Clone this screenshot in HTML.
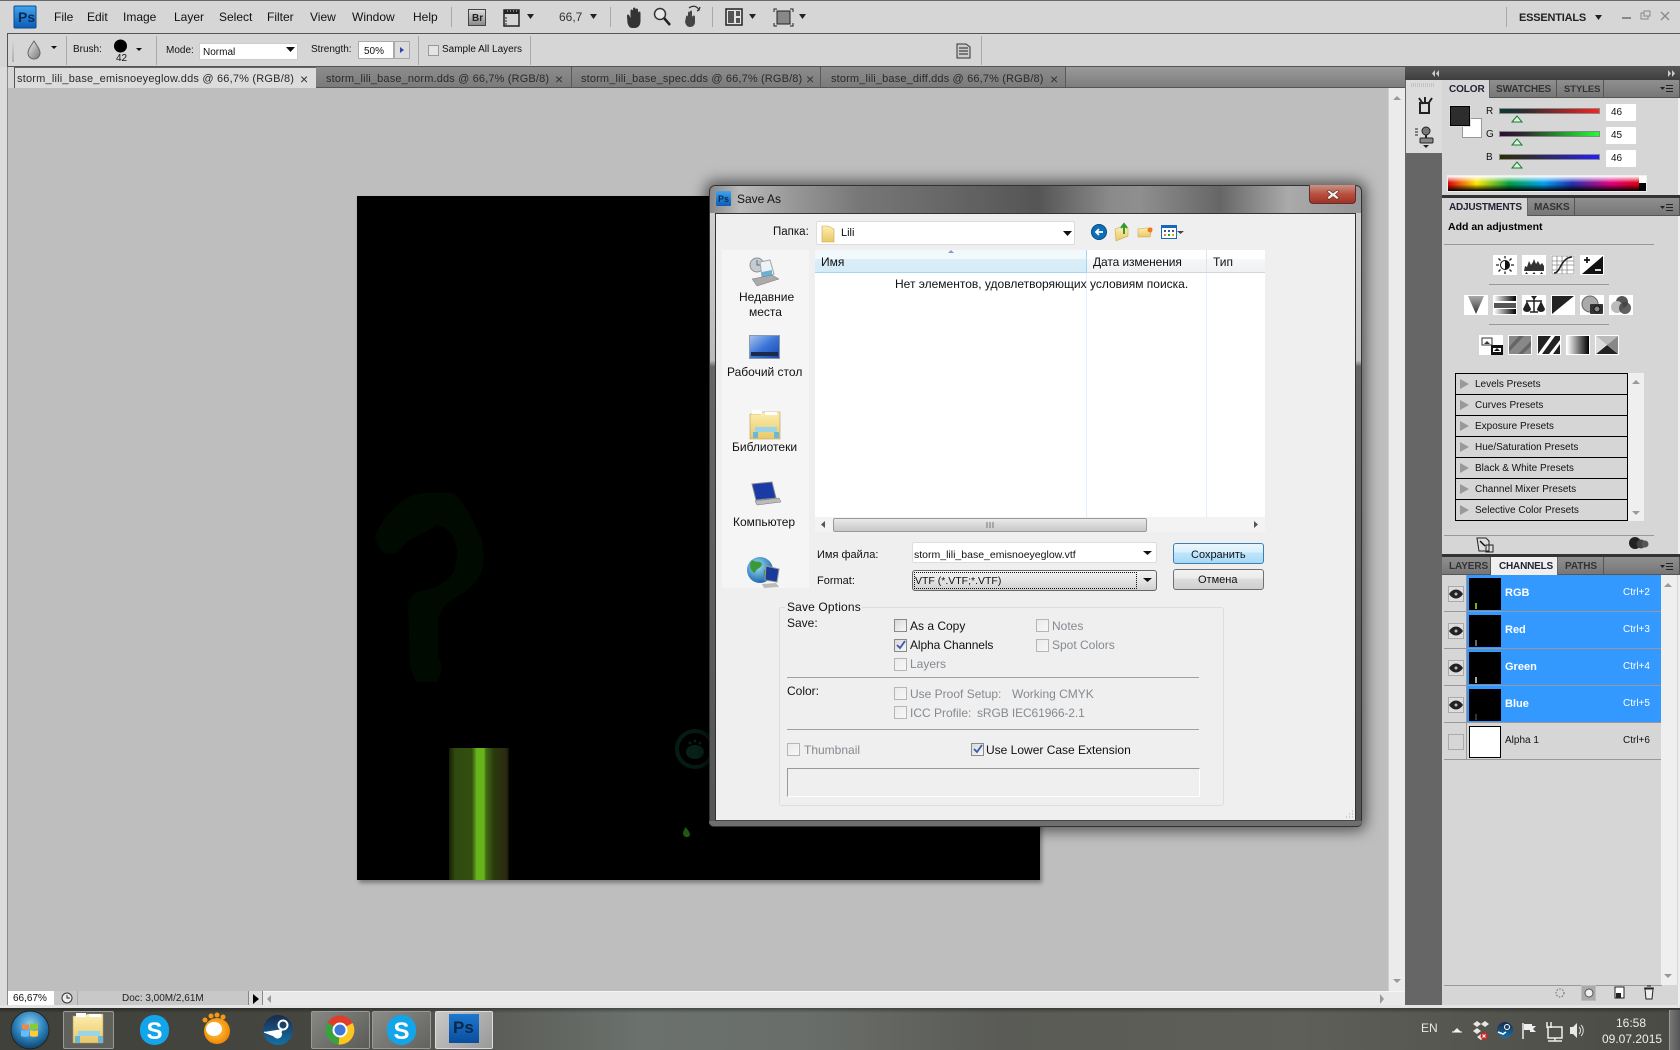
<!DOCTYPE html>
<html lang="en"><head><meta charset="utf-8"><title>Photoshop Save As</title>
<style>
html,body{margin:0;padding:0;width:1680px;height:1050px;overflow:hidden;background:#d6d6d6}
body{position:relative;font-family:"Liberation Sans","DejaVu Sans",sans-serif;font-size:12px;color:#111}
div{position:absolute;box-sizing:border-box}
i{position:absolute;font-style:normal;white-space:nowrap;line-height:14px}
svg{position:absolute;left:0;top:0}
.tab{top:67px;height:21px;background:linear-gradient(#8c8c8c,#7b7b7b);border-right:1px solid #5a5a5a;border-bottom:1px solid #555}
.sep{background:#a9a9a9;width:1px}
.f11{font-size:11px}.f10{font-size:10px}
.tt{font-size:11px;letter-spacing:.2px;top:72px;color:#2a2a2a}
.tx{font-size:14px;top:72px;color:#333}
.pt{background:linear-gradient(#8f8f8f,#777);border-right:1px solid #555;border-bottom:1px solid #555;height:18px}
.pa{background:#d6d6d6;height:18px;border-right:1px solid #666}
.tb{font-weight:bold;font-size:10px;color:#333;letter-spacing:-.1px}
.row{left:1444px;width:217px;height:37px;border-bottom:1px solid #999}
.sel{left:23px;width:194px;top:0;bottom:0;background:#3399ff}
.thumb{background:#000;left:1469px;width:32px;height:32px}
.eye{left:1448px;width:16px;height:16px;border:1px solid #aaa;background:#ddd}
.p{left:1455px;width:173px;height:21px;border:1px solid #000;border-bottom:0}
.cb{width:13px;height:13px;border:1px solid #8a8a8a;background:linear-gradient(135deg,#d9d9d9,#f7f7f7)}
.cb.d{border-color:#b6b6b6;background:linear-gradient(135deg,#ebebeb,#f7f7f7)}
.dis{color:#858a90}
.ctl{background:#fff;border-radius:2px;border:1px solid #d6d6d6}
</style></head><body>

<!-- Menu bar -->
<div style="left:0;top:0;width:1680px;height:33px;background:#d6d6d6;border-top:1px solid #6a6a6a"></div>
<i style="left:54px;top:10px">File</i><i style="left:87px;top:10px">Edit</i><i style="left:123px;top:10px">Image</i><i style="left:174px;top:10px">Layer</i><i style="left:219px;top:10px">Select</i><i style="left:267px;top:10px">Filter</i><i style="left:310px;top:10px">View</i><i style="left:352px;top:10px">Window</i><i style="left:413px;top:10px">Help</i>
<div class="sep" style="left:451px;top:7px;height:20px"></div><div class="sep" style="left:610px;top:7px;height:20px"></div><div class="sep" style="left:712px;top:7px;height:20px"></div><div class="sep" style="left:1506px;top:7px;height:20px"></div>
<i style="left:559px;top:10px;color:#333">66,7</i>
<i style="left:1519px;top:11px;font-weight:bold;color:#222;letter-spacing:-.2px;font-size:11px">ESSENTIALS</i>

<!-- Options bar -->
<div style="left:7px;top:33px;width:1673px;height:34px;background:#d6d6d6;border:1px solid #555;border-right:0"></div>
<div class="sep" style="left:66px;top:36px;height:29px"></div><div class="sep" style="left:156px;top:36px;height:29px"></div><div class="sep" style="left:418px;top:36px;height:29px"></div><div class="sep" style="left:530px;top:36px;height:29px"></div><div class="sep" style="left:981px;top:36px;height:29px"></div>
<i class="f10" style="left:73px;top:43px">Brush:</i><i class="f10" style="left:116px;top:52px">42</i><i class="f10" style="left:166px;top:44px">Mode:</i>
<div style="left:199px;top:43px;width:99px;height:17px;background:#fff;border:1px solid #ccc"></div><i class="f10" style="left:203px;top:46px">Normal</i>
<i class="f10" style="left:311px;top:43px">Strength:</i>
<div style="left:358px;top:41px;width:36px;height:18px;background:#fff;border:1px solid #aaa"></div><i class="f10" style="left:364px;top:45px">50%</i>
<div style="left:394px;top:41px;width:16px;height:18px;background:#dcdcdc;border:1px solid #aaa"></div>
<div style="left:428px;top:45px;width:11px;height:11px;border:1px solid #999;background:#e4e4e4"></div><i class="f10" style="left:442px;top:43px">Sample All Layers</i>

<!-- Tabs -->
<div style="left:1066px;top:67px;width:339px;height:21px;background:linear-gradient(#9a9a9a,#7d7d7d);border-bottom:1px solid #555"></div>
<div style="left:14px;top:67px;width:302px;height:21px;background:#dcdcdc;border-left:1px solid #555;border-top:1px solid #666"></div>
<div class="tab" style="left:316px;width:256px"></div><div class="tab" style="left:572px;width:249px"></div><div class="tab" style="left:821px;width:245px"></div>
<i class="tt" style="left:17px">storm_lili_base_emisnoeyeglow.dds @ 66,7% (RGB/8)</i><i class="tx" style="left:300px">×</i>
<i class="tt" style="left:326px;letter-spacing:.15px">storm_lili_base_norm.dds @ 66,7% (RGB/8)</i><i class="tx" style="left:555px">×</i>
<i class="tt" style="left:581px;letter-spacing:.15px">storm_lili_base_spec.dds @ 66,7% (RGB/8)</i><i class="tx" style="left:806px">×</i>
<i class="tt" style="left:831px;letter-spacing:.15px">storm_lili_base_diff.dds @ 66,7% (RGB/8)</i><i class="tx" style="left:1050px">×</i>

<!-- Workspace -->
<div style="left:0;top:67px;width:8px;height:943px;background:#dcdcdc;border-right:1px solid #8a8a8a"></div>
<div style="left:8px;top:88px;width:1380px;height:903px;background:#bebebe"></div>
<div style="left:1388px;top:88px;width:17px;height:903px;background:#ebebeb;border-left:1px solid #cfcfcf"></div>
<div style="left:8px;top:991px;width:1397px;height:14px;background:#e9e9e9;border-top:1px solid #f5f5f5"></div>
<div style="left:8px;top:1005px;width:1397px;height:1px;background:#999"></div>
<div style="left:8px;top:991px;width:46px;height:14px;background:#fff"></div><i class="f10" style="left:13px;top:992px">66,67%</i>
<div style="left:54px;top:991px;width:209px;height:14px;background:#c8c8c8"></div><div style="left:77px;top:991px;width:1px;height:14px;background:#aaa"></div>
<i class="f10" style="left:122px;top:992px;color:#222">Doc: 3,00M/2,61M</i>
<div style="left:248px;top:991px;width:15px;height:14px;background:#ddd;border-left:1px solid #888;border-right:1px solid #888"></div>

<!-- Document -->
<div style="left:357px;top:196px;width:683px;height:684px;background:#000;box-shadow:2px 3px 4px rgba(0,0,0,.35);overflow:hidden">
  <svg width="683" height="684" style="left:0;top:0">
  <path d="M18 342C20 330 36 310 50 302C60 297 70 296 96 297C106 303 116 325 125 344C127 355 127 362 126 371C122 382 118 387 113 392C106 398 97 402 90 407C85 413 82 418 81 424L81 461C83 465 85 468 85 471C84 477 82 481 80 486L60 486C57 481 55 476 53 471L51 407C53 402 56 399 60 396C67 394 74 393 80 391C87 386 92 382 96 377C99 370 100 362 100 354C99 347 96 341 93 336C89 332 85 330 80 329C70 335 60 340 50 346C46 350 43 353 40 357C35 358 30 358 26 356C22 352 20 347 18 342Z" fill="#010a01"/>
  <circle cx="338" cy="553" r="18" fill="none" stroke="#051c14" stroke-width="4"/><ellipse cx="338" cy="556" rx="9" ry="7" fill="#08221a"/><circle cx="333" cy="547" r="1.500" fill="#08221a"/><circle cx="338" cy="545" r="1.500" fill="#08221a"/><circle cx="343" cy="547" r="1.500" fill="#08221a"/>
  <path d="M326 638c0-3 2-5 2-7c3 2 5 6 5 8c-1 3-6 3-7-1z" fill="#1f5a10"/></svg>
  <div style="left:92px;top:552px;width:60px;height:132px;background:linear-gradient(90deg,#141f07 0,#2f4a0f 10%,#334f10 38%,#4f8a17 43%,#66b31c 46%,#66b31c 58%,#3f6a13 62%,#2a3a0e 75%,#2a2a10 95%,#110f05 100%)"></div>
</div>

<!-- Right dock -->
<div style="left:1405px;top:67px;width:275px;height:13px;background:linear-gradient(#565656,#3e3e3e)"></div>
<div style="left:1405px;top:80px;width:37px;height:930px;background:#666"></div>
<div style="left:1406px;top:80px;width:36px;height:73px;background:#dcdcdc"></div>
<div style="left:1442px;top:80px;width:238px;height:925px;background:#d6d6d6;border-right:2px solid #efefef"></div>

<!-- Color panel -->
<div class="pt" style="left:1490px;top:80px;width:190px"></div>
<div class="pt" style="left:1490px;top:80px;width:67px"></div><div class="pt" style="left:1557px;top:80px;width:47px"></div>
<div class="pa" style="left:1442px;top:80px;width:48px"></div>
<i class="tb" style="left:1449px;top:83px;color:#223">COLOR</i><i class="tb" style="left:1496px;top:83px">SWATCHES</i><i class="tb" style="left:1564px;top:83px;font-size:9.5px">STYLES</i>
<div style="left:1462px;top:118px;width:20px;height:20px;background:#fff;border:1px solid #999"></div>
<div style="left:1450px;top:106px;width:20px;height:20px;background:#2e2d2e;border:1px solid #000;outline:1px solid #ddd"></div>
<i class="f10" style="left:1486px;top:105px">R</i><i class="f10" style="left:1486px;top:128px">G</i><i class="f10" style="left:1486px;top:151px">B</i>
<div style="left:1499px;top:108px;width:101px;height:6px;background:linear-gradient(90deg,#0a3a3a,#2e2d2e 25%,#ff2020);border:1px solid #888"></div>
<div style="left:1499px;top:131px;width:101px;height:6px;background:linear-gradient(90deg,#2e0a35,#2e2d2e 25%,#20ff30);border:1px solid #888"></div>
<div style="left:1499px;top:154px;width:101px;height:6px;background:linear-gradient(90deg,#2e2d00,#2e2d2e 25%,#2020ff);border:1px solid #888"></div>
<div class="ctl" style="left:1605px;top:103px;width:32px;height:19px"></div><div class="ctl" style="left:1605px;top:126px;width:32px;height:19px"></div><div class="ctl" style="left:1605px;top:149px;width:32px;height:19px"></div>
<i class="f10" style="left:1611px;top:106px">46</i><i class="f10" style="left:1611px;top:129px">45</i><i class="f10" style="left:1611px;top:152px">46</i>
<div style="left:1447px;top:175px;width:200px;height:17px;background:#eee"></div>
<div style="left:1448px;top:176px;width:191px;height:15px;background:linear-gradient(#fff 0,rgba(255,255,255,0) 45%,rgba(0,0,0,0) 55%,#000 100%),linear-gradient(90deg,#e00010 0,#ffe800 15%,#00a040 32%,#00a0f0 50%,#2030b0 65%,#e00080 85%,#e00010 100%)"></div>
<div style="left:1639px;top:176px;width:7px;height:7px;background:#fff"></div><div style="left:1639px;top:183px;width:7px;height:8px;background:#000"></div>

<!-- Adjustments panel -->
<div style="left:1442px;top:195px;width:238px;height:3px;background:#333"></div>
<div class="pt" style="left:1528px;top:198px;width:152px"></div><div class="pt" style="left:1528px;top:198px;width:47px"></div>
<div class="pa" style="left:1442px;top:198px;width:86px"></div>
<i class="tb" style="left:1449px;top:201px;color:#223;letter-spacing:-.2px">ADJUSTMENTS</i><i class="tb" style="left:1534px;top:201px">MASKS</i>
<i style="left:1448px;top:220px;font-weight:bold;font-size:10.5px;color:#000">Add an adjustment</i>
<div style="left:1444px;top:244px;width:210px;height:1px;background:#999"></div>
<div style="left:1489px;top:284px;width:120px;height:1px;background:#999"></div>
<div style="left:1489px;top:324px;width:120px;height:1px;background:#999"></div>

<!-- Presets -->
<div class="p" style="top:373px"></div><div class="p" style="top:394px"></div><div class="p" style="top:415px"></div><div class="p" style="top:436px"></div><div class="p" style="top:457px"></div><div class="p" style="top:478px"></div>
<div class="p" style="top:499px;height:22px;border-bottom:1px solid #000"></div>
<div style="left:1628px;top:373px;width:16px;height:148px;background:#efefef"></div>
<i class="f10" style="left:1475px;top:378px;color:#111">Levels Presets</i><i class="f10" style="left:1475px;top:399px;color:#111">Curves Presets</i><i class="f10" style="left:1475px;top:420px;color:#111">Exposure Presets</i><i class="f10" style="left:1475px;top:441px;color:#111">Hue/Saturation Presets</i><i class="f10" style="left:1475px;top:462px;color:#111">Black &amp; White Presets</i><i class="f10" style="left:1475px;top:483px;color:#111">Channel Mixer Presets</i><i class="f10" style="left:1475px;top:504px;color:#111">Selective Color Presets</i>
<div style="left:1444px;top:535px;width:210px;height:1px;background:#999"></div>

<!-- Channels panel -->
<div style="left:1442px;top:554px;width:238px;height:3px;background:#333"></div>
<div class="pt" style="left:1558px;top:557px;width:122px"></div><div class="pt" style="left:1558px;top:557px;width:46px"></div><div class="pt" style="left:1442px;top:557px;width:49px"></div>
<div class="pa" style="left:1491px;top:557px;width:67px;background:#efefef"></div>
<i class="tb" style="left:1449px;top:560px">LAYERS</i><i class="tb" style="left:1499px;top:560px;color:#223;letter-spacing:-.2px">CHANNELS</i><i class="tb" style="left:1565px;top:560px">PATHS</i>
<div style="left:1661px;top:575px;width:16px;height:410px;background:#efefef"></div>
<div class="row" style="top:575px"><div class="sel"></div></div>
<div class="row" style="top:612px"><div class="sel"></div></div>
<div class="row" style="top:649px"><div class="sel"></div></div>
<div class="row" style="top:686px"><div class="sel"></div></div>
<div class="row" style="top:723px"></div>
<div style="left:1466px;top:575px;width:1px;height:185px;background:#999"></div>
<div class="eye" style="top:586px"></div><div class="eye" style="top:623px"></div><div class="eye" style="top:660px"></div><div class="eye" style="top:697px"></div><div class="eye" style="top:734px;background:#d6d6d6"></div>
<div class="thumb" style="top:578px"></div><div class="thumb" style="top:615px"></div><div class="thumb" style="top:652px"></div><div class="thumb" style="top:689px"></div>
<div style="left:1475px;top:603px;width:2px;height:6px;background:#6bb81f"></div><div style="left:1475px;top:640px;width:2px;height:6px;background:#666"></div><div style="left:1475px;top:677px;width:2px;height:6px;background:#aaa"></div><div style="left:1475px;top:714px;width:2px;height:6px;background:#333"></div>
<div style="left:1469px;top:726px;width:32px;height:32px;background:#fff;border:1px solid #000"></div>
<i class="f11" style="left:1505px;top:586px;color:#fff;font-weight:bold">RGB</i><i class="f11" style="left:1505px;top:623px;color:#fff;font-weight:bold">Red</i><i class="f11" style="left:1505px;top:660px;color:#fff;font-weight:bold">Green</i><i class="f11" style="left:1505px;top:697px;color:#fff;font-weight:bold">Blue</i><i class="f10" style="left:1505px;top:734px">Alpha 1</i>
<i class="f10" style="left:1623px;top:586px;color:#fff">Ctrl+2</i><i class="f10" style="left:1623px;top:623px;color:#fff">Ctrl+3</i><i class="f10" style="left:1623px;top:660px;color:#fff">Ctrl+4</i><i class="f10" style="left:1623px;top:697px;color:#fff">Ctrl+5</i><i class="f10" style="left:1623px;top:734px">Ctrl+6</i>
<div style="left:1444px;top:985px;width:218px;height:1px;background:#999"></div>
<div style="left:1581px;top:985px;width:15px;height:16px;background:#aaa;border:1px solid #bbb"></div>

<!-- Taskbar -->
<div style="left:0;top:1005px;width:1680px;height:4px;background:#e4e4e4"></div>
<div style="left:0;top:1008px;width:1680px;height:42px;background:linear-gradient(rgba(0,0,0,.35),rgba(0,0,0,0) 12%),linear-gradient(90deg,#41413c 0,#464640 300px,#5c5e59 500px,#6b716d 640px,#6a6e6a 800px,#5a5b56 1000px,#5f5f59 1300px,#54544e 1500px,#4a4a45 1680px)"></div>
<div style="left:63px;top:1011px;width:51px;height:38px;background:rgba(255,255,255,.16);border:1px solid #999;border-radius:2px"></div>
<div style="left:311px;top:1011px;width:59px;height:38px;background:linear-gradient(135deg,rgba(255,255,255,.35),rgba(255,255,255,.08));border:1px solid #999;border-radius:2px"></div>
<div style="left:372px;top:1011px;width:59px;height:38px;background:linear-gradient(135deg,rgba(255,255,255,.35),rgba(255,255,255,.08));border:1px solid #999;border-radius:2px"></div>
<div style="left:435px;top:1011px;width:58px;height:38px;background:linear-gradient(135deg,#c9c9c9,#999);border:1px solid #ddd;border-radius:2px"></div>
<div style="left:449px;top:1014px;width:30px;height:29px;background:linear-gradient(#1d78d0,#0a4d9c)"></div>
<i style="left:453px;top:1021px;font-size:17px;font-weight:bold;color:#0a2748">Ps</i>
<div style="left:1669px;top:1010px;width:11px;height:40px;background:linear-gradient(90deg,#777,#555);border-left:1px solid #999"></div>
<i style="left:1421px;top:1021px;color:#e8e8e8">EN</i>
<i style="left:1616px;top:1016px;color:#eee">16:58</i><i style="left:1602px;top:1032px;color:#eee">09.07.2015</i>

<!-- Dialog -->
<div style="left:709px;top:185px;width:653px;height:642px;border-radius:6px;background:linear-gradient(90deg,#888 0,#bbb 30px,#999 80px,#777 150px,#666 240px,#555 328px,#8a8a8a 400px,#8f8f8f 430px,#666 510px,#aaa 578px,#999 640px);box-shadow:0 0 14px 4px rgba(0,0,0,.55);border:1px solid #333"></div>
<div style="left:709px;top:213px;width:7px;height:614px;background:linear-gradient(#cfcfcf,#bbb 24%,#666 25%,#555);border-left:1px solid #333;border-bottom-left-radius:5px"></div>
<div style="left:1355px;top:213px;width:7px;height:614px;background:linear-gradient(#cfcfcf,#c0c0c0 24%,#666 25%,#555);border-right:1px solid #333;border-bottom-right-radius:5px"></div>
<div style="left:709px;top:821px;width:653px;height:6px;background:#6e6e6e;border-bottom:1px solid #333;border-radius:0 0 5px 5px"></div>
<div style="left:715px;top:213px;width:641px;height:608px;background:#efefef;border:1px solid #333;border-bottom-color:#444"></div>
<div style="left:1309px;top:185px;width:47px;height:19px;background:linear-gradient(#c99488,#b9503e 50%,#a03226);border:1px solid #5a3030;border-top:0;border-radius:0 0 4px 4px"></div>
<i style="left:737px;top:192px;color:#111">Save As</i>

<i style="left:773px;top:225px;color:#111;font-size:11.5px">Папка:</i>
<div style="left:816px;top:221px;width:259px;height:24px;background:#fff;border:1px solid #ddd;border-radius:2px"></div>
<i class="f11" style="left:841px;top:226px">Lili</i>

<div style="left:722px;top:250px;width:87px;height:338px;background:#f5f5f5"></div>
<i style="left:739px;top:290px;color:#111">Недавние</i><i style="left:749px;top:305px;color:#111">места</i>
<i style="left:727px;top:365px;color:#111">Рабочий стол</i><i style="left:732px;top:440px;color:#111">Библиотеки</i><i style="left:733px;top:515px;color:#111">Компьютер</i>

<div style="left:815px;top:250px;width:450px;height:267px;background:#fff"></div>
<div style="left:815px;top:250px;width:271px;height:23px;background:linear-gradient(#f2f9fd 0,#f2f9fd 40%,#dbeef8 41%,#d5ebf7 100%);border-bottom:1px solid #a5d6f0"></div>
<div style="left:1086px;top:250px;width:179px;height:23px;background:linear-gradient(#fff 0,#fff 40%,#f6f7f8 41%,#f0f1f2 100%);border-bottom:1px solid #d5d5d5;border-left:1px solid #a5d6f0"></div>
<div style="left:1206px;top:250px;width:1px;height:22px;background:#e3e4e5"></div>
<div style="left:1086px;top:273px;width:1px;height:244px;background:#e2efff"></div><div style="left:1206px;top:273px;width:1px;height:244px;background:#e2efff"></div>
<i style="left:821px;top:255px;color:#111">Имя</i><i style="left:1093px;top:255px;color:#111;letter-spacing:-.1px">Дата изменения</i><i style="left:1213px;top:255px;color:#111">Тип</i>
<i style="left:895px;top:277px;color:#111">Нет элементов, удовлетворяющих условиям поиска.</i>
<div style="left:815px;top:517px;width:450px;height:15px;background:#f3f3f3"></div>
<div style="left:833px;top:518px;width:314px;height:14px;background:linear-gradient(#eaeaea,#d9d9d9 45%,#c8c8c8);border:1px solid #9a9a9a;border-radius:2px"></div>

<i style="left:817px;top:548px;color:#111;font-size:11px">Имя файла:</i><i style="left:817px;top:574px;color:#111;font-size:11px">Format:</i>
<div style="left:912px;top:542px;width:245px;height:21px;background:#fff;border:1px solid #ddd;border-radius:2px"></div>
<i style="left:914px;top:548px;font-size:10.5px">storm_lili_base_emisnoeyeglow.vtf</i>
<div style="left:912px;top:570px;width:245px;height:21px;background:linear-gradient(#f2f2f2,#e6e6e6 45%,#d0d0d0);border:1px solid #666;border-radius:3px"></div>
<div style="left:914px;top:572px;width:223px;height:17px;border:1px dotted #111"></div>
<i style="left:915px;top:574px;font-size:10.5px">VTF (*.VTF;*.VTF)</i>
<div style="left:1173px;top:543px;width:91px;height:21px;background:linear-gradient(#eaf6fd,#d9f0fc 45%,#bee6fd 46%,#a7d9f5);border:1px solid #3c7fb1;border-radius:3px"></div>
<div style="left:1173px;top:569px;width:91px;height:21px;background:linear-gradient(#f2f2f2,#ebebeb 45%,#dddddd 46%,#cfcfcf);border:1px solid #707070;border-radius:3px"></div>
<i style="left:1191px;top:548px;color:#111;font-size:11px">Сохранить</i><i style="left:1198px;top:573px;color:#111;font-size:11px">Отмена</i>

<div style="left:779px;top:607px;width:445px;height:199px;border:1px solid #d5dfe5;border-radius:3px"></div>
<div style="left:785px;top:600px;width:77px;height:14px;background:#efefef"></div>
<i style="left:787px;top:600px;letter-spacing:.15px">Save Options</i><i style="left:787px;top:616px">Save:</i><i style="left:787px;top:684px">Color:</i>
<div class="cb" style="left:894px;top:619px"></div><i style="left:910px;top:619px">As a Copy</i>
<div class="cb" style="left:894px;top:639px"></div><i style="left:910px;top:638px;letter-spacing:-.1px">Alpha Channels</i>
<div class="cb d" style="left:894px;top:658px"></div><i class="dis" style="left:910px;top:657px">Layers</i>
<div class="cb d" style="left:1036px;top:619px"></div><i class="dis" style="left:1052px;top:619px">Notes</i>
<div class="cb d" style="left:1036px;top:639px"></div><i class="dis" style="left:1052px;top:638px">Spot Colors</i>
<div style="left:787px;top:677px;width:412px;height:1px;background:#a0a0a0"></div>
<div class="cb d" style="left:894px;top:687px"></div><i class="dis" style="left:910px;top:687px">Use Proof Setup:</i><i class="dis" style="left:1012px;top:687px">Working CMYK</i>
<div class="cb d" style="left:894px;top:706px"></div><i class="dis" style="left:910px;top:706px">ICC Profile:</i><i class="dis" style="left:977px;top:706px;letter-spacing:-.1px">sRGB IEC61966-2.1</i>
<div style="left:787px;top:729px;width:412px;height:1px;background:#a0a0a0"></div>
<div class="cb d" style="left:787px;top:743px"></div><i class="dis" style="left:804px;top:743px">Thumbnail</i>
<div class="cb" style="left:971px;top:743px"></div><i style="left:986px;top:743px">Use Lower Case Extension</i>
<div style="left:787px;top:768px;width:413px;height:29px;border:1px solid #fff;border-top-color:#999;border-left-color:#999"></div>

<!-- Icon overlay -->
<svg width="1680" height="1050" viewBox="0 0 1680 1050">
<defs>
<linearGradient id="gPs" x1="0" y1="0" x2="0" y2="1"><stop offset="0" stop-color="#3fa4ee"/><stop offset="1" stop-color="#0b5cb8"/></linearGradient>
<linearGradient id="gBr" x1="0" y1="0" x2="0" y2="1"><stop offset="0" stop-color="#ddd"/><stop offset="1" stop-color="#888"/></linearGradient>
<linearGradient id="gDrop" x1="0" y1="0" x2="1" y2="1"><stop offset="0" stop-color="#eee"/><stop offset="1" stop-color="#777"/></linearGradient>
<linearGradient id="gFold" x1="0" y1="0" x2="0" y2="1"><stop offset="0" stop-color="#fdeeb0"/><stop offset="1" stop-color="#e8c868"/></linearGradient>
<linearGradient id="gScr" x1="0" y1="0" x2="1" y2="1"><stop offset="0" stop-color="#a9c4ee"/><stop offset=".5" stop-color="#3a74d8"/><stop offset="1" stop-color="#1a45a8"/></linearGradient>
<linearGradient id="gV" x1="0" y1="0" x2="0" y2="1"><stop offset="0" stop-color="#aaa"/><stop offset="1" stop-color="#333"/></linearGradient>
<linearGradient id="gH" x1="0" y1="0" x2="1" y2="0"><stop offset="0" stop-color="#fff"/><stop offset="1" stop-color="#000"/></linearGradient>
<radialGradient id="gOrb" cx=".5" cy=".35" r=".7"><stop offset="0" stop-color="#8fd0f0"/><stop offset=".55" stop-color="#2a7fb8"/><stop offset="1" stop-color="#0c3558"/></radialGradient>
<radialGradient id="gSmile" cx=".45" cy=".45" r=".6"><stop offset="0" stop-color="#ffd24d"/><stop offset="1" stop-color="#f08000"/></radialGradient>
<radialGradient id="gGlobe" cx=".4" cy=".35" r=".7"><stop offset="0" stop-color="#9ee0f5"/><stop offset="1" stop-color="#1660a8"/></radialGradient>
<linearGradient id="gStm" x1="0" y1="0" x2="0" y2="1"><stop offset="0" stop-color="#1a2a4c"/><stop offset="1" stop-color="#1471a8"/></linearGradient>
</defs>

<!-- top bar icons -->
<rect x="14" y="6" width="22" height="22" rx="1" fill="url(#gPs)" stroke="#0a4a90"/>
<text x="18" y="22" font-family="Liberation Sans" font-size="14" font-weight="bold" fill="#082a50">Ps</text>
<rect x="468.500" y="9.500" width="17" height="16" fill="url(#gBr)" stroke="#444"/><text x="472" y="21" font-family="Liberation Sans" font-size="10" font-weight="bold" fill="#222">Br</text>
<rect x="504" y="10" width="15" height="16" fill="#d6d6d6" stroke="#222" stroke-width="1.500"/><rect x="504" y="10" width="15" height="4" fill="#222"/><path d="M505 18h2M505 21h2M505 24h2" stroke="#222"/><path d="M507 11h1M510 11h1M513 11h1M516 11h1" stroke="#ddd"/>
<path d="M527 14h7l-3.500 5zM590 14h7l-3.500 5zM749 14h7l-3.500 5zM799 14h7l-3.500 5zM1595 15h7l-3.500 5z" fill="#222"/>
<!-- hand -->
<path d="M627 16c0-2 2-2 2.500 0l1 2v-7c0-2 2.200-2 2.500 0v5v-7c0-2 2.500-2 2.500 0v7v-6c0-2 2.500-2 2.500 0v7v-4c0-2 2.500-2 2.500 0v8c0 4-2 7-6 7h-2c-3 0-4-2-5-5z" fill="#333"/>
<!-- zoom -->
<circle cx="660" cy="14" r="5.500" fill="#e8e8e8" stroke="#333" stroke-width="1.500"/><path d="M664 18l6 7" stroke="#222" stroke-width="2.500"/>
<!-- rotate -->
<path d="M686 17c0-2 2-2 2 0v-4c0-2 2-2 2 0v3v-4c0-2 2-2 2 0v5c1-2 3-2 3 0v5c0 3-2 5-5 5c-3 0-4-2-5-5z" fill="#444"/><path d="M689 8c4-3 8-2 10 2l-2 1m2-1l1-3" fill="none" stroke="#333" stroke-width="1.300"/>
<!-- arrange -->
<rect x="726" y="9" width="16" height="16" fill="#e4e4e4" stroke="#222" stroke-width="1.500"/><rect x="728" y="11" width="6" height="12" fill="#555"/><rect x="736" y="11" width="4" height="5" fill="#555"/><rect x="736" y="18" width="4" height="5" fill="#555"/>
<rect x="777" y="11" width="13" height="13" fill="#888" stroke="#222"/><path d="M774 12v-3h3M774 23v3h3M793 12v-3h-3M793 23v3h-3" fill="none" stroke="#222"/>
<!-- window ctl -->
<rect x="1622" y="17" width="9" height="2" fill="#888"/><rect x="1641" y="13" width="7" height="6" fill="none" stroke="#888"/><rect x="1644" y="11" width="6" height="5" fill="#d6d6d6" stroke="#888"/><path d="M1661 12l8 8M1669 12l-8 8" stroke="#888" stroke-width="1.300"/>

<!-- options -->
<path d="M12 38h2v24h-2z" fill="url(#gBr)" opacity=".5"/>
<path d="M34 41c4 6 6 9 6 12a6 6 0 0 1-12 0c0-3 2-6 6-12z" fill="url(#gDrop)" stroke="#666"/>
<path d="M51 46h6l-3 3zM136 48h6l-3 3zM286 47h9l-4.500 5z" fill="#111"/>
<ellipse cx="120.500" cy="46" rx="6.500" ry="6.500" fill="#000"/>
<path d="M400 47l4 3l-4 3z" fill="#3344aa"/>
<path d="M957 44h9l4 3v11h-13z" fill="#ccc" stroke="#333"/><path d="M959 48h9M959 51h9M959 54h9" stroke="#222"/>

<!-- dock arrows -->
<path d="M1435 70l-3 3.500l3 3.500zM1439 70l-3 3.500l3 3.500zM1668 70l3 3.500l-3 3.500zM1672 70l3 3.500l-3 3.500z" fill="#ccc"/>
<path d="M1411 84h24M1411 86h24" stroke="#aaa" stroke-dasharray="1 1"/>
<!-- dock icons -->
<path d="M1420 103h9v10h-9z" fill="none" stroke="#222" stroke-width="2"/><path d="M1419 98l4 6M1425 97v7M1432 98l-4 6" stroke="#222" stroke-width="2"/>
<rect x="1420" y="138" width="13" height="5" rx="1" fill="#888" stroke="#222"/><circle cx="1426" cy="131" r="4" fill="#777" stroke="#222"/><path d="M1426 135v3" stroke="#222" stroke-width="2"/><path d="M1415 129h3M1415 132h3M1415 135h3" stroke="#222"/><path d="M1423 145h6l-3 3z" fill="#222"/>
<!-- panel menus -->
<g fill="#222"><path d="M1660 87h5l-2.500 3zM1660 206h5l-2.500 3zM1660 565h5l-2.500 3z"/></g>
<g stroke="#222"><path d="M1666 85.500h7M1666 88.500h7M1666 91.500h7M1666 204.500h7M1666 207.500h7M1666 210.500h7M1666 563.500h7M1666 566.500h7M1666 569.500h7"/></g>
<!-- slider triangles -->
<g fill="#d8f8d8" stroke="#1a7a30"><path d="M1512 122l5-6l5 6zM1512 145l5-6l5 6zM1512 168l5-6l5 6z"/></g>

<!-- adjustment icons row 1 -->
<g transform="translate(1493,255)"><rect width="24" height="20" fill="#fff"/><circle cx="12" cy="10" r="4.500" fill="#fff" stroke="#111"/><path d="M12 5.500a4.500 4.500 0 0 1 0 9z" fill="#111"/><path d="M12 1v2.500M12 16.500v2.500M3 10h3M18 10h3M5.500 3.500l2 2M16.500 14.500l2 2M18.500 3.500l-2 2M7.500 14.500l-2 2" stroke="#222" stroke-width="1.300"/></g>
<g transform="translate(1522,255)"><rect width="24" height="20" fill="#fff"/><path d="M2 16l1-5l2 1l2-6l2 4l2-3l1-3l2 5l2-3l2 4l2-2l2 3v5z" fill="#333"/><path d="M3 19l1.500-2l1.500 2zM10.500 19l1.500-2l1.500 2zM18 19l1.500-2l1.500 2z" fill="#222"/></g>
<g transform="translate(1551,255)"><rect width="24" height="20" fill="#fff"/><path d="M1 1h22v18h-22zM6 1v18M11 1v18M16 1v18M1 6h22M1 10h22M1 15h22" fill="none" stroke="#888" stroke-width=".8"/><path d="M3 18c7 0 6-15 18-16" fill="none" stroke="#222" stroke-width="1.600"/></g>
<g transform="translate(1580,255)"><rect width="24" height="20" fill="#fff"/><path d="M23 1v18h-21z" fill="#111"/><path d="M4 5h6M7 2v6" stroke="#111" stroke-width="1.700"/><path d="M15 15h6" stroke="#fff" stroke-width="1.700"/></g>
<!-- row 2 -->
<g transform="translate(1464,295)"><rect width="24" height="20" fill="#fff"/><path d="M4 1h16l-8 18z" fill="url(#gV)"/></g>
<g transform="translate(1493,295)"><rect width="24" height="20" fill="#fff"/><rect x="1" y="1" width="22" height="5" fill="url(#gH)"/><rect x="1" y="8" width="22" height="5" fill="#555"/><rect x="1" y="14" width="22" height="5" fill="url(#gH)"/></g>
<g transform="translate(1522,295)"><rect width="24" height="20" fill="#fff"/><path d="M12 3v14M4 6h16M8 17h8" stroke="#222" stroke-width="1.500"/><path d="M9 1h6l-3 4z" fill="#222"/><path d="M1 14l4-8l4 8a4 3 0 0 1-8 0zM15 14l4-8l4 8a4 3 0 0 1-8 0z" fill="#222"/></g>
<g transform="translate(1551,295)"><rect width="24" height="20" fill="#fff"/><path d="M1 1h22l-22 18z" fill="#222"/></g>
<g transform="translate(1580,295)"><rect width="24" height="20" fill="#fff"/><circle cx="10" cy="9" r="8" fill="#aaa" stroke="#666"/><rect x="10" y="9" width="13" height="10" rx="1" fill="#333"/><circle cx="17" cy="14" r="3" fill="#888" stroke="#111"/></g>
<g transform="translate(1609,295)"><rect width="24" height="20" fill="#fff"/><circle cx="13" cy="7" r="6" fill="#555"/><circle cx="8" cy="12" r="6" fill="#bbb"/><circle cx="16" cy="13" r="6" fill="#444" opacity=".85"/></g>
<!-- row 3 -->
<g transform="translate(1479,335)"><rect width="24" height="20" fill="#fff"/><rect x="12" y="10" width="12" height="10" fill="#111"/><path d="M3 3h10v7h-10z" fill="none" stroke="#333"/><path d="M5 9l3-3l3 3z" fill="#333"/><path d="M14 17h8v-4h-8z" fill="#fff"/><path d="M15 16l3-3l3 3z" fill="#111"/></g>
<g transform="translate(1508,335)"><rect width="24" height="20" fill="#fff"/><rect x="1" y="1" width="22" height="18" fill="#888"/><path d="M1 12l10-11h5l-15 16zM10 19l13-13v5l-8 8z" fill="#666"/></g>
<g transform="translate(1537,335)"><rect width="24" height="20" fill="#fff"/><rect x="1" y="1" width="22" height="18" fill="#222"/><path d="M1 19l13-18h4l-13 18zM12 19l11-14v4l-7 10z" fill="#fff"/></g>
<g transform="translate(1566,335)"><rect width="24" height="20" fill="#fff"/><rect x="1" y="1" width="22" height="18" fill="url(#gH)"/></g>
<g transform="translate(1595,335)"><rect width="24" height="20" fill="#fff"/><path d="M1 1h22l-11 9z" fill="#bbb"/><path d="M1 19h22l-11-9z" fill="#222"/><path d="M1 1l11 9l-11 9z" fill="#ddd"/><path d="M23 1l-11 9l11 9z" fill="#888"/></g>

<!-- presets arrows / scroll -->
<g fill="#999"><path d="M1460 379l9 5l-9 5zM1460 400l9 5l-9 5zM1460 421l9 5l-9 5zM1460 442l9 5l-9 5zM1460 463l9 5l-9 5zM1460 484l9 5l-9 5zM1460 505l9 5l-9 5z"/>
<path d="M1632 384l4-4l4 4zM1632 511l4 4l4-4zM1664 587l4-4l4 4zM1664 974l4 4l4-4zM1393 100l4-4l4 4zM1393 979l4 4l4-4zM1380 994l4 5l-4 5zM271 995v8l-4-4z"/></g>
<path d="M1477 538h9l3 3v10h-10z M1486 545h7v7h-7z" fill="#ddd" stroke="#222"/><path d="M1480 541l5 5" stroke="#111" stroke-width="1.500"/>
<circle cx="1635" cy="543" r="6" fill="#222"/><circle cx="1641" cy="544" r="4.500" fill="#444"/><circle cx="1645" cy="544" r="3.500" fill="#555"/>

<!-- eyes -->
<g fill="#222"><path d="M1449 594c4-6 10-6 14 0c-4 6-10 6-14 0z"/><path d="M1449 631c4-6 10-6 14 0c-4 6-10 6-14 0z"/><path d="M1449 668c4-6 10-6 14 0c-4 6-10 6-14 0z"/><path d="M1449 705c4-6 10-6 14 0c-4 6-10 6-14 0z"/></g>
<g fill="#bbb"><circle cx="1456" cy="594" r="1.500"/><circle cx="1456" cy="631" r="1.500"/><circle cx="1456" cy="668" r="1.500"/><circle cx="1456" cy="705" r="1.500"/></g>

<!-- bottom channel icons -->
<circle cx="1560" cy="993" r="4" fill="none" stroke="#666" stroke-dasharray="1.500 1.500"/><circle cx="1589" cy="993" r="4" fill="#eee" stroke="#555"/>
<path d="M1615 987h9v11h-9z" fill="#fff" stroke="#222"/><path d="M1616 993h5v5h-5z" fill="#222"/>
<path d="M1645 989h8l-1 10h-6zM1644 988h10M1647 986h4" fill="#eee" stroke="#222"/>
<circle cx="67" cy="998" r="5" fill="#eee" stroke="#333"/><path d="M67 995v3h3" fill="none" stroke="#222"/>
<path d="M253 994l6 5l-6 5z" fill="#000"/>

<!-- dialog icons -->
<rect x="716" y="191" width="15" height="15" rx="1" fill="url(#gPs)"/><text x="718" y="202" font-family="Liberation Sans" font-size="9" font-weight="bold" fill="#082a50">Ps</text>
<path d="M1329 190l4 3l4-3l2 1.500l-3.500 3l3.500 3l-2 2l-4-3l-4 3l-2-2l3.500-3l-3.500-3z" fill="#eee" stroke="#5a2a20" stroke-width=".6"/>
<path d="M822 226h6l6 3v13h-12z" fill="url(#gFold)" stroke="#c8a850" stroke-width=".6"/>
<path d="M1063 231h9l-4.500 5zM1143 551h9l-4.500 4zM1143 578h9l-4.500 4z" fill="#111"/>
<path d="M1177 231h7l-3.500 3z" fill="#444"/>
<circle cx="1099" cy="232" r="7.500" fill="#0d6fb8" stroke="#0b4a80"/><path d="M1103 232h-7m3-3l-3 3l3 3" stroke="#fff" stroke-width="1.800" fill="none"/>
<path d="M1115 229l6-2l7 1v8l-12 5z" fill="url(#gFold)" stroke="#c8a850" stroke-width=".6"/><path d="M1124 234v-9m-3 3l3-4l3 4" stroke="#2f9a2f" stroke-width="2" fill="none"/>
<path d="M1138 229l8-1h6l-2 9h-12z" fill="url(#gFold)" stroke="#c8a850" stroke-width=".6"/><circle cx="1150" cy="230" r="2.500" fill="#ee7722"/>
<rect x="1161.500" y="225.500" width="15" height="13" fill="#fff" stroke="#1a66c0"/><rect x="1161" y="225" width="16" height="3" fill="#1a66c0"/><path d="M1164 230h2v2h-2zM1168 230h2v2h-2zM1172 230h2v2h-2z" fill="#35a"/><path d="M1164 234h2v2h-2z" fill="#e73"/><path d="M1168 234h2v2h-2z" fill="#2a2"/><path d="M1172 234h2v2h-2z" fill="#da2"/>
<path d="M948 253l3-3l3 3z" fill="#7ba0bf"/>
<!-- Recent -->
<circle cx="757" cy="265" r="7" fill="#c4ccd2" stroke="#8a9298"/><path d="M757 260v5h4" stroke="#667" fill="none"/>
<path d="M760 262l10-2l4 14l-12 3z" fill="#eef2f5" stroke="#9aa"/><path d="M762 272l10-2v8l-10 2z" fill="#6ab0d8"/><path d="M752 279l20-4l7 4l-22 7z" fill="#aaa" stroke="#777" stroke-width=".5"/>
<!-- Desktop -->
<rect x="749.500" y="335.500" width="30" height="23" fill="url(#gScr)" stroke="#8a9aa8"/><rect x="751" y="352" width="27" height="4" fill="#1a2a48"/>
<!-- Libraries -->
<path d="M750 414h10l2-2h18v27h-30z" fill="url(#gFold)" stroke="#b89a50" stroke-width=".6"/><rect x="752" y="410" width="10" height="4" fill="#fff"/><rect x="765" y="412" width="12" height="3" fill="#fff"/><path d="M753 432h26v6h-5v-6h-16v6h-5z" fill="#6ab8d8"/><path d="M755 427h22v5h-22z" fill="#9ad4e8"/>
<!-- Computer -->
<path d="M752 484l20-2l4 16l-20 2z" fill="#1a3aa8" stroke="#888"/><path d="M755 501l24-3l2 4l-24 3z" fill="#bbb" stroke="#777" stroke-width=".5"/>
<!-- Globe -->
<circle cx="760" cy="570" r="13" fill="url(#gGlobe)"/><path d="M752 560c4 3 8 0 10 4c-1 5-6 4-7 9c-4-1-7-8-3-13zM764 570c3-1 5 0 6 4c-2 3-4 4-6 3z" fill="#3a9a3a"/><path d="M766 566l13 3l-2 13l-12-2z" fill="#1a3a9a" stroke="#999"/><path d="M762 584l14-1l3 4l-15 1z" fill="#bbb"/>
<!-- scrollbar -->
<path d="M825 521v7l-4-3.500zM1254 521v7l4-3.500z" fill="#555"/><path d="M987 522v6M990 522v6M993 522v6" stroke="#777"/>
<path d="M1346 817h1M1349 817h1M1349 814h1M1352 817h1M1352 814h1M1352 811h1" stroke="#aaa"/>
<!-- Ticks -->
<path d="M897 645l3 3l5-7" stroke="#3a5ab0" stroke-width="1.800" fill="none"/><path d="M974 749l3 3l5-7" stroke="#3a5ab0" stroke-width="1.800" fill="none"/>

<!-- Taskbar icons -->
<circle cx="30" cy="1030" r="19" fill="url(#gOrb)" stroke="#222"/>
<path d="M22 1024c3 1 5 1 7 0v5c-2 1-4 1-7 0z" fill="#e84"/><path d="M30 1023c3 1 5 1 8 0v6c-3 1-5 1-8 0z" fill="#8c3"/><path d="M21 1030c3 1 5 1 8 0v6c-3 1-5 1-8 0z" fill="#6bf"/><path d="M30 1030c3 1 5 1 8 0v6c-3 1-5 1-8 0z" fill="#fc3"/>
<path d="M73 1016h12l2-2h16v29h-30z" fill="url(#gFold)" stroke="#b89a50" stroke-width=".6"/><rect x="76" y="1013" width="10" height="4" fill="#fff"/><rect x="89" y="1014" width="12" height="3" fill="#fff"/><path d="M75 1036h28v7h-5v-7h-18v7h-5z" fill="#6ab8d8"/><path d="M78 1031h22v5h-22z" fill="#9ad4e8"/>
<g><rect x="140" y="1015" width="29" height="30" rx="14" fill="#12a5ea"/><text x="154.500" y="1039" text-anchor="middle" font-family="Liberation Sans" font-size="24" font-weight="bold" fill="#fff">S</text></g>
<g><rect x="387" y="1015" width="29" height="30" rx="14" fill="#12a5ea"/><text x="401.500" y="1039" text-anchor="middle" font-family="Liberation Sans" font-size="24" font-weight="bold" fill="#fff">S</text></g>
<circle cx="217" cy="1031" r="13" fill="url(#gSmile)"/><ellipse cx="214" cy="1029" rx="8" ry="7" fill="#fff"/><g fill="#f39a10"><circle cx="205" cy="1020" r="2.500"/><circle cx="211" cy="1016" r="2.500"/><circle cx="217" cy="1015" r="2.500"/><circle cx="223" cy="1017" r="2.500"/></g>
<circle cx="278" cy="1030" r="15" fill="url(#gStm)"/><circle cx="283" cy="1025" r="4.500" fill="none" stroke="#fff" stroke-width="2"/><path d="M264 1032l10 4a4 4 0 0 0 7-4l2-3" fill="#fff" stroke="#fff"/>
<circle cx="340" cy="1030" r="14.500" fill="#e03c2a"/><path d="M340 1030l12.500-7a14.500 14.500 0 0 1-14 21.500z" fill="#f8c820"/><path d="M340 1030l-1.500 14.500a14.500 14.500 0 0 1-11-22z" fill="#3aa040"/><circle cx="340" cy="1030" r="6.500" fill="#3b78d8" stroke="#fff" stroke-width="2"/>
<path d="M1453 1032l4-4l4 4z" fill="#eee"/><path d="M1452 1032h10" stroke="#fff"/>
<path d="M1477 1021l4 3l-4 3l-4-3zM1485 1021l4 3l-4 3l-4-3zM1477 1028l4 3l-4 3l-4-3zM1481 1034l4 3l-4 3l-4-3z" fill="#e8e8e8"/><circle cx="1484" cy="1036" r="3.500" fill="#e02020"/><path d="M1482.500 1034.500l3 3m0-3l-3 3" stroke="#fff"/>
<circle cx="1505" cy="1030" r="8" fill="url(#gStm)"/><circle cx="1507" cy="1027" r="2.500" fill="none" stroke="#fff"/><path d="M1498 1032l5 2l3-2" stroke="#fff" fill="none" stroke-width="1.500"/>
<path d="M1523 1023v16" stroke="#eee" stroke-width="1.500"/><path d="M1524 1024h8v2h4l-3 3l3 3h-6v-2h-6z" fill="#eee"/>
<rect x="1548" y="1027" width="14" height="11" fill="none" stroke="#eee" stroke-width="1.500"/><path d="M1548 1041h14M1555 1038v3M1547 1022v6M1551 1022v6" stroke="#eee" stroke-width="1.500"/>
<path d="M1570 1027h3l4-4v15l-4-4h-3z" fill="#e8e8e8"/><path d="M1579 1027c2 2 2 5 0 7M1581 1025c3 3 3 8 0 11" stroke="#ddd" fill="none"/>
</svg>
</body></html>
